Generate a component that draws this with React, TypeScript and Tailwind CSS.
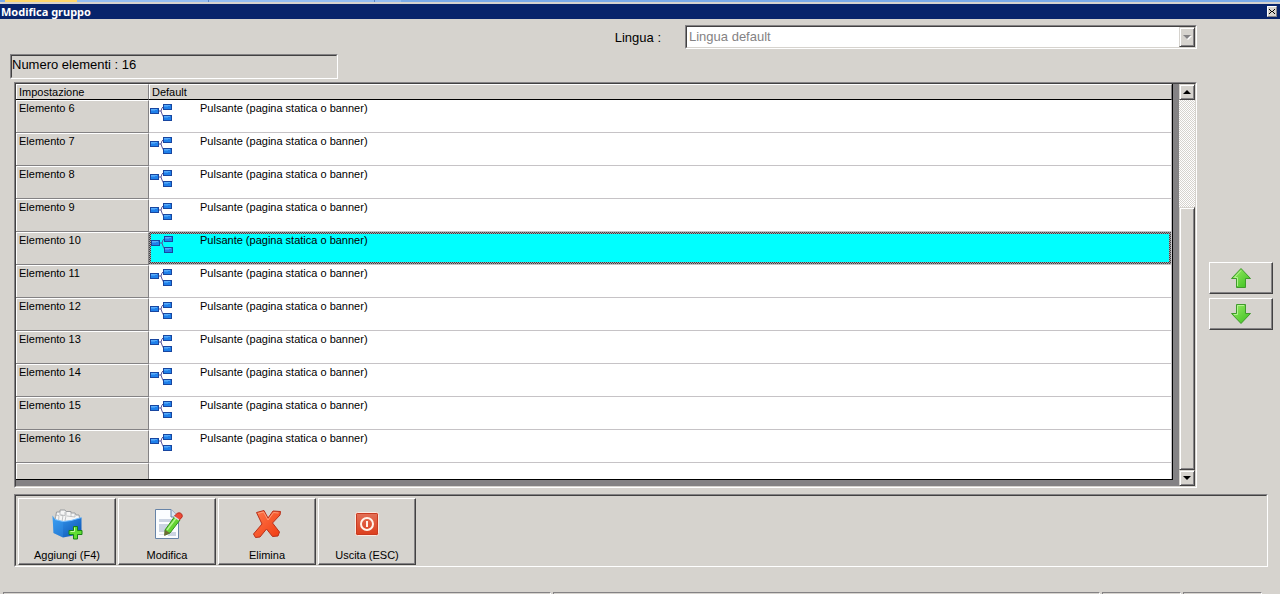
import { ReactNode } from "react";
import { clsx } from "clsx";

const rows = [6, 7, 8, 9, 10, 11, 12, 13, 14, 15, 16];
const selected = 10;

const raised =
  "border border-t-white border-l-white border-r-[#424142] border-b-[#424142] shadow-[inset_-1px_-1px_0_#848284]";
const raisedSoft =
  "border border-t-[#d6d3ce] border-l-[#d6d3ce] border-r-[#424142] border-b-[#424142] bg-[#d6d3ce] shadow-[inset_1px_1px_0_#fff,inset_-1px_-1px_0_#848284]";
const statusCell = "h-0.5 border-t border-r border-l border-t-[#848284] border-r-white border-l-[#848284]";

// Double 3D edge used by every inset panel
function Sunken({ className, children }: { className?: string; children?: ReactNode }) {
  return (
    <div className={clsx("border border-t-[#848284] border-l-[#848284] border-r-white border-b-white", className)}>
      <div className="flex h-full border border-t-[#424142] border-l-[#424142] border-r-[#d6d3ce] border-b-[#d6d3ce]">
        {children}
      </div>
    </div>
  );
}

function TreeIcon() {
  return (
    <svg width="24" height="18" viewBox="0 0 24 18" className="block">
      <path d="M9 8h2l1-3 2-2M11 8l1 3 2 4" fill="none" stroke="#5a559c" strokeWidth="1" />
      <g fill="#1f80ea" stroke="#1846a0">
        <rect x="0.5" y="5.5" width="8" height="5" />
        <rect x="13.5" y="1.5" width="8" height="5" />
        <rect x="13.5" y="12.5" width="8" height="5" />
      </g>
      <path d="M1 6.500h6M14 2.500h6M14 13.500h6" stroke="#58acfa" />
      <path d="M1 7.500h4M14 3.500h4M14 14.500h4" stroke="#3f97f4" />
    </svg>
  );
}

function ArrowIcon({ down }: { down?: boolean }) {
  return (
    <svg width="22" height="20" viewBox="0 0 22 20" className="block">
      <defs>
        <linearGradient id="green" x1="0" x2="1" y1="0" y2="1">
          <stop offset="0" stopColor="#9cec68" />
          <stop offset="1" stopColor="#38bf1c" />
        </linearGradient>
      </defs>
      {down ? (
        <>
          <path d="M6.500 0.500H15.500V9.500H20.500L11 19.500L1.500 9.500H6.500Z" fill="url(#green)" stroke="#3f9a2c" />
          <path d="M14 1.500H7.500V10.500H4" fill="none" stroke="#b4f391" />
        </>
      ) : (
        <>
          <path d="M11 0.500L20.500 10.500H15.500V19.500H6.500V10.500H1.500Z" fill="url(#green)" stroke="#3f9a2c" />
          <path d="M11 2.500L4.500 9.500H7.500V18" fill="none" stroke="#b4f391" />
        </>
      )}
    </svg>
  );
}

function AddIcon() {
  return (
    <svg width="32" height="32" viewBox="0 0 32 32">
      <defs>
        <linearGradient id="box" x1="0" x2="1" y1="0" y2="1">
          <stop offset="0" stopColor="#3ba2f6" />
          <stop offset="1" stopColor="#0a4fb0" />
        </linearGradient>
      </defs>
      <path d="M4 12L5.500 4h3.500V2h5l1 1.500h5V5h4l1 2h3l1 6-12 3Z" fill="#f6f6f6" stroke="#9b9da0" />
      <path
        d="M3.500 11l1.500-4 3 .5-.5 6M9 4v3l3 .5-1 6M10 7l4 .5V4M15 3.500V8l-1 5M16 8l4 .5V5M20 8.500l4 .5V6"
        fill="none"
        stroke="#b3b5b8"
        strokeWidth="0.8"
      />
      <path d="M1.500 7.500L4 11.500 12 13.500 20 12.500 30.500 9.500V26L12 29.500 2.500 25Z" fill="url(#box)" />
      <path d="M12 13.500v16L2.500 25 1.500 7.500 4 11.500Z" fill="#3f9ff2" fillOpacity="0.3" />
      <path d="M4 11.500L12 13.500l8-1L30.500 9.500" fill="none" stroke="#79c0ff" />
      <path d="M22.500 18.500h4v4h4.500v4h-4.500v4.500h-4v-4.500H18v-4h4.500Z" fill="#62dd33" stroke="#178413" />
      <path d="M23.500 19.500v4H19.500" fill="none" stroke="#c5fba4" />
    </svg>
  );
}

function EditIcon() {
  return (
    <svg width="32" height="32" viewBox="0 0 32 32">
      <path d="M4.500 1.500H20L27.500 9V30.500H4.500Z" fill="#fbfdff" stroke="#6784a8" />
      <path d="M20 1.500V9h7.500" fill="#dbe6f2" stroke="#6784a8" />
      <path d="M8 11h15v3H8ZM8 16h9v8H8ZM17 24h8v4H17Z" fill="#cbd4e2" />
      <path d="M8 26.500h8" stroke="#dfe5ee" />
      <path d="M14 22L24 8l5 4L19 25l-5 2Z" fill="#63d532" stroke="#318d1d" />
      <path d="M16 22L25.500 9.500" stroke="#b4f58f" strokeWidth="1.500" />
      <path d="M14 22l5 3-6 3Z" fill="#6d6a35" />
      <path d="M23.500 8l3-3q3-1 4.500 1.500 1 2-1 4L28 12Z" fill="#ee4a35" stroke="#b72c22" />
      <path d="M23 8.500l5 3.500" stroke="#dce2e8" strokeWidth="1.500" />
    </svg>
  );
}

function DeleteIcon() {
  return (
    <svg width="32" height="32" viewBox="0 0 32 32">
      <defs>
        <linearGradient id="red" x1="0" x2="1" y1="0" y2="1">
          <stop offset="0" stopColor="#ff7a4c" />
          <stop offset="1" stopColor="#f03a10" />
        </linearGradient>
      </defs>
      <path
        d="M5.500 4.500L13 2.500 17 10 22 3 29.500 3.500 29 7 21.500 15 28.500 24 27 28 21.500 28.500 15.500 21 9 29 4.500 29.500 2.500 26 11 16Z"
        fill="url(#red)"
        stroke="#b7301a"
        strokeLinejoin="round"
      />
      <path d="M7 5.500l5.500-1.500 4.500 8 5.500-7.500 5 .5" fill="none" stroke="#ff9a76" />
    </svg>
  );
}

function ExitIcon() {
  return (
    <svg width="32" height="32" viewBox="0 0 32 32">
      <defs>
        <linearGradient id="exit" x1="0" x2="0" y1="0" y2="1">
          <stop offset="0" stopColor="#e2725a" />
          <stop offset="1" stopColor="#dc3c1a" />
        </linearGradient>
      </defs>
      <rect x="4.500" y="4.500" width="23" height="23" rx="2" fill="url(#exit)" stroke="#fbe9e2" />
      <rect x="5.500" y="5.500" width="21" height="21" rx="1" fill="none" stroke="#c93a20" />
      <circle cx="16" cy="16" r="6" fill="none" stroke="#fff3ea" strokeWidth="2" />
      <path d="M16 13v6" stroke="#fff3ea" strokeWidth="2" />
    </svg>
  );
}

const actions = [
  { label: "Aggiungi (F4)", icon: <AddIcon /> },
  { label: "Modifica", icon: <EditIcon /> },
  { label: "Elimina", icon: <DeleteIcon /> },
  { label: "Uscita (ESC)", icon: <ExitIcon /> },
];

export default function App() {
  return (
    <div className="flex min-h-screen flex-col bg-[#d6d3ce] font-['Liberation_Sans',Arial,sans-serif] text-[11px] text-black">
      {/* Edge of the window behind */}
      <div className="flex h-0.5 bg-[#7babe8] pl-[5px]">
        <div className="w-[72px] bg-[#ffd76b]" />
        <div className="w-[132px] border-r border-[#5a86c6] bg-[#94bef2]" />
        <div className="w-[166px] border-r border-[#5a86c6] bg-[#94bef2]" />
        <div className="w-[26px] bg-[#94bef2]" />
      </div>

      {/* Title bar */}
      <header className="mt-0.5 flex h-[15px] items-center justify-between bg-[#08246b] pr-[3px] pl-px">
        <h1 className="font-['Noto_Sans',sans-serif] text-[11px] leading-[15px] font-bold text-white">Modifica gruppo</h1>
        <button
          aria-label="Chiudi"
          className="flex h-[11px] w-[10px] items-center justify-center border border-t-white border-l-white border-r-[#848284] border-b-[#848284] bg-[#d6d3ce]"
        >
          <svg width="6" height="5" viewBox="0 0 6 5" shapeRendering="crispEdges">
            <path d="M0 0h1v1h1v1h2v-1h1v-1h1v1h-1v1h-1v1h1v1h1v1h-1v-1h-1v-1h-2v1h-1v1h-1v-1h1v-1h1v-1h-1v-1h-1Z" />
          </svg>
        </button>
      </header>

      {/* Language */}
      <div className="flex items-center justify-end pt-1.5 text-[13px]">
        <label htmlFor="lingua" className="mr-6 pt-0.5">Lingua :</label>
        <Sunken className="mr-[83px] h-6 w-2/5">
          <div className="relative flex flex-1 bg-white">
            <select id="lingua" disabled className="w-full appearance-none pl-0.5 text-[13px] text-[#848284] disabled:opacity-100">
              <option>Lingua default</option>
            </select>
            <span className={clsx("pointer-events-none absolute inset-y-0 right-0 flex w-4 items-center justify-center", raisedSoft)}>
              <svg width="9" height="5" viewBox="0 0 9 5" className="shrink-0">
                <path d="M1 1h8L5 5Z" fill="#fff" />
                <path d="M0 0h8L4 4Z" fill="#848284" />
              </svg>
            </span>
          </div>
        </Sunken>
      </div>

      <Sunken className="mt-[5px] ml-[10px] h-[25px] w-[328px]">
        <p className="text-[13px] leading-[18px]">Numero elementi : 16</p>
      </Sunken>

      <main className="mt-[3px] flex pr-[7px] pl-[14px]">
        <Sunken className="flex-1">
          <div className="flex-1 bg-[#848284] pr-1.5 pb-1.5">
            <table className="w-full table-fixed border-separate border-spacing-0 border-r border-b border-black bg-white text-left">
              <colgroup>
                <col className="w-[133px]" />
                <col />
              </colgroup>
              <thead>
                <tr className="h-4 bg-[#d6d3ce] leading-[14px]">
                  <th className="border-t border-r border-b border-t-white border-r-[#848284] border-b-black p-0 pl-[3px] font-normal shadow-[inset_1px_0_0_#fff]">
                    Impostazione
                  </th>
                  <th className="border-t border-r border-b border-t-white border-r-[#848284] border-b-black p-0 pl-[3px] font-normal shadow-[inset_1px_0_0_#fff]">
                    Default
                  </th>
                </tr>
              </thead>
              <tbody>
                {rows.map((n) => (
                  <tr key={n} className="h-[33px] align-top leading-[15px]">
                    <th className="border-t border-r border-b border-t-white border-r-[#848284] border-b-[#848284] bg-[#d6d3ce] p-0 pl-[3px] font-normal shadow-[inset_1px_0_0_#fff]">
                      Elemento {n}
                    </th>
                    <td
                      className={clsx(
                        "border-r border-b border-[#c6c3c6]",
                        n === selected
                          ? "bg-[repeating-conic-gradient(#424142_0_25%,#a5a2a5_0_50%)] bg-size-[2px_2px] p-0.5 leading-[13px]"
                          : "p-0 pt-px pl-px",
                      )}
                    >
                      <div className={clsx("flex h-7 items-start", n === selected && "bg-[#00ffff]")}>
                        <div className={clsx(n === selected ? "w-[49px] pt-px" : "w-[50px] pt-0.5")}>
                          <TreeIcon />
                        </div>
                        Pulsante (pagina statica o banner)
                      </div>
                    </td>
                  </tr>
                ))}
                <tr className="h-4">
                  <th className="border-t border-r border-t-white border-r-[#848284] bg-[#d6d3ce] p-0 shadow-[inset_1px_0_0_#fff]" />
                  <td className="border-r border-[#c6c3c6] p-0" />
                </tr>
              </tbody>
            </table>
          </div>

          {/* Scrollbar */}
          <div className="flex w-4 flex-col bg-[repeating-conic-gradient(#d6d3ce_0_25%,#fff_0_50%)] bg-size-[2px_2px]">
            <button aria-label="Scorri su" className={clsx("flex h-4 items-center justify-center", raisedSoft)}>
              <svg width="8" height="4" viewBox="0 0 8 4">
                <path d="M0 4L4 0L8 4Z" />
              </svg>
            </button>
            <div className="flex flex-1 flex-col justify-end">
              <div className={clsx("h-[71%]", raisedSoft)} />
            </div>
            <button aria-label="Scorri giù" className={clsx("flex h-4 items-center justify-center", raisedSoft)}>
              <svg width="8" height="4" viewBox="0 0 8 4">
                <path d="M0 0L4 4L8 0Z" />
              </svg>
            </button>
          </div>
        </Sunken>

        {/* Move up / down */}
        <div className="ml-3 flex flex-col gap-1 pt-45">
          <button aria-label="Sposta su" className={clsx("flex h-8 w-16 items-center justify-center", raised)}>
            <ArrowIcon />
          </button>
          <button aria-label="Sposta giù" className={clsx("flex h-8 w-16 items-center justify-center", raised)}>
            <ArrowIcon down />
          </button>
        </div>
      </main>

      {/* Actions */}
      <Sunken className="mt-1.5 mr-3 ml-[14px]">
        <div className="flex gap-0.5 pt-0.5 pl-0.5">
          {actions.map((a) => (
            <button key={a.label} className={clsx("flex h-[67px] w-[98px] flex-col items-center pt-[9px]", raised)}>
              {a.icon}
              <span className="mt-2 leading-[14px]">{a.label}</span>
            </button>
          ))}
        </div>
      </Sunken>

      {/* Status bar */}
      <footer className="mt-auto flex gap-0.5 pr-[18px] pl-[3px]">
        <div className={clsx("flex-1", statusCell)} />
        <div className={clsx("flex-1", statusCell)} />
        <div className={clsx("w-[79px]", statusCell)} />
        <div className={clsx("w-[79px]", statusCell)} />
      </footer>
    </div>
  );
}
